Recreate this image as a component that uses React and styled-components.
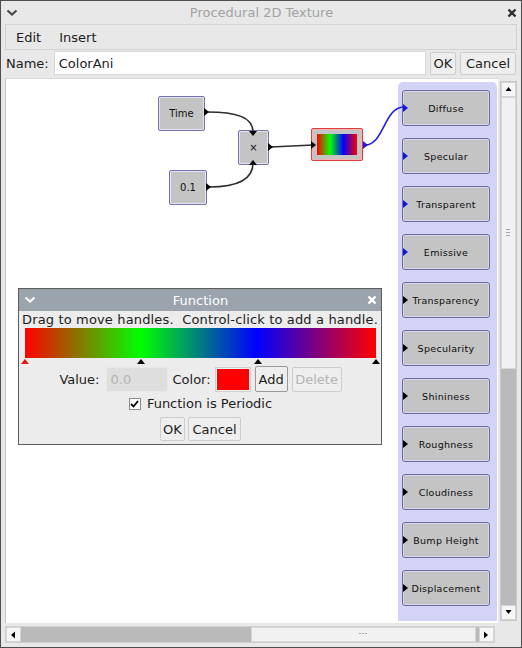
import React from "react";
import styled, { createGlobalStyle } from "styled-components";

const GlobalStyle = createGlobalStyle`
  html, body { margin: 0; padding: 0; background: #e8e8e8; }
  body {
    font-family: "DejaVu Sans", Verdana, sans-serif;
    font-size: 13px;
    color: #1c1c1c;
  }
  * { box-sizing: border-box; }
`;

const SPECTRUM = "linear-gradient(to right, #ff0000 0%, #00ff00 33%, #0000ff 66%, #ff0000 100%)";

const Frame = styled.div`
  width: 522px;
  height: 648px;
  border: 1px solid #4e4e4e;
  background: #e8e8e8;
  display: flex;
  flex-direction: column;
  overflow: hidden;
`;

const TitleBar = styled.div`
  height: 23px;
  display: grid;
  grid-template-columns: 24px 1fr 24px;
  align-items: center;
  padding: 0 4px 0 5px;
  color: ${(p) => (p.$light ? "#fff" : "#a2a2a2")};
  background: ${(p) => p.$bg || "transparent"};
`;

const TitleText = styled.div`
  text-align: center;
  line-height: 1;
`;

const TitleIcon = styled.svg`
  display: block;
  justify-self: ${(p) => (p.$end ? "end" : "start")};
`;

const MenuBar = styled.div`
  height: 26px;
  margin: 0 4px;
  border: 1px solid #d2d2d2;
  display: flex;
  align-items: center;
  gap: 18px;
  padding-left: 10px;
`;

const NameRow = styled.div`
  height: 26px;
  display: flex;
  align-items: center;
  gap: 4px;
  padding: 0 5px 0 5px;
`;

const Label = styled.span`
  margin-right: ${(p) => p.$gap || 0}px;
  color: ${(p) => (p.$muted ? "#a8a8a8" : "inherit")};
`;

const TextField = styled.div`
  flex: 1;
  height: 24px;
  background: #fff;
  border: 1px solid #d6d6d6;
  display: flex;
  align-items: center;
  padding-left: 4px;
`;

const Button = styled.div`
  height: ${(p) => p.$h || 23}px;
  width: ${(p) => p.$w}px;
  display: flex;
  align-items: center;
  justify-content: center;
  background: #eeeeee;
  border: 1px solid ${(p) => (p.$focus ? "#9a9a9a" : "#cdcdcd")};
  border-radius: 2px;
  color: ${(p) => (p.$disabled ? "#b4b4b4" : "#1c1c1c")};
`;

const Content = styled.div`
  flex: 1;
  margin: 2px 4px 4px 4px;
  display: grid;
  grid-template-columns: 1fr 17px;
  grid-template-rows: 1fr 17px;
  column-gap: 2px;
  row-gap: 3px;
`;

const Viewport = styled.div`
  position: relative;
  background: #fff;
  border-left: 1px solid #c4c4c4;
  border-top: 1px solid #dadada;
  overflow: hidden;
`;

const Wires = styled.svg`
  position: absolute;
  left: 0;
  top: 0;
  z-index: 1;
  pointer-events: none;
`;

const Node = styled.div`
  position: absolute;
  left: ${(p) => p.$x - 6}px;
  top: ${(p) => p.$y - 80}px;
  width: ${(p) => p.$w}px;
  height: ${(p) => p.$h}px;
  background: #c4c4c4;
  border: 1px solid ${(p) => (p.$selected ? "#e23c3c" : "#7474aa")};
  box-shadow: inset 0 0 0 1px ${(p) => (p.$selected ? "#f4b4b4" : "#e4e4f0")};
  border-radius: 2px;
  display: flex;
  align-items: center;
  justify-content: center;
  font-size: 10px;
  color: #111;
`;

const Swatch = styled.div`
  width: 40px;
  height: 21px;
  background: ${SPECTRUM};
`;

const OutputPanel = styled.div`
  position: absolute;
  left: 392px;
  top: 3px;
  bottom: 2px;
  width: 99px;
  background: #d3d3f6;
  border-radius: 5px 5px 0 0;
  display: flex;
  flex-direction: column;
  gap: 12px;
  padding: 8px 0 0 4px;
`;

const Port = styled.div`
  position: relative;
  width: 88px;
  height: 36px;
  background: #c4c4c4;
  border: 1px solid #6a6aa6;
  box-shadow: inset 0 0 0 1px #d8d8e4;
  border-radius: 3px;
  display: flex;
  align-items: center;
  justify-content: center;
  font-size: 9.5px;
  letter-spacing: 0.3px;
  color: #0c0c0c;

  &::before {
    content: "";
    position: absolute;
    left: 0;
    top: 13px;
    border-style: solid;
    border-width: 4px 0 4px 5px;
    border-color: transparent transparent transparent ${(p) => (p.$input ? "#1414e0" : "#000")};
  }
`;

const Dialog = styled.div`
  position: absolute;
  left: 12px;
  top: 209px;
  width: 364px;
  height: 157px;
  z-index: 2;
  border: 1px solid #5c5c5c;
  background: #ececec;
  display: flex;
  flex-direction: column;
`;

const DialogBody = styled.div`
  flex: 1;
  display: flex;
  flex-direction: column;
  padding: 0 5px 3px 3px;
`;

const Hint = styled.div`
  height: 17px;
  line-height: 17px;
  white-space: nowrap;
  letter-spacing: 0.15px;
`;

const GradientBar = styled.div`
  height: 30px;
  margin: 0 0 0 3px;
  background: ${SPECTRUM};
`;

const HandleTrack = styled.div`
  position: relative;
  height: 8px;
  margin: 0 0 0 3px;
`;

const Handle = styled.div`
  position: absolute;
  top: 1px;
  width: 0;
  height: 0;
  margin-left: -4px;
  border-style: solid;
  border-width: 0 4px 5px 4px;
  border-color: transparent transparent ${(p) => (p.$active ? "#e01818" : "#000")} transparent;
`;

const Row = styled.div`
  height: ${(p) => p.$h}px;
  margin-top: ${(p) => p.$mt || 0}px;
  display: flex;
  align-items: center;
  justify-content: center;
  gap: ${(p) => p.$gap || 4}px;
  padding-left: 3px;
`;

const ValueInput = styled.div`
  width: 62px;
  height: 25px;
  background: #dedede;
  border: 1px solid #e8e8e8;
  color: #b4b4b4;
  display: flex;
  align-items: center;
  padding-left: 4px;
`;

const ColorWell = styled.div`
  width: 34px;
  height: 23px;
  background: #ff0000;
  border: 1px solid #f4f4f4;
  outline: 1px solid #cfcfcf;
`;

const Check = styled.div`
  width: 12px;
  height: 12px;
  background: #fff;
  border: 1px solid #8c8c8c;
  display: flex;
  align-items: center;
  justify-content: center;
  margin-right: 3px;
`;

const VScroll = styled.div`
  margin: 3px 0 2px 0;
  display: flex;
  flex-direction: column;
  background: #bababa;
  border: 1px solid #c8c8c8;
`;

const HScroll = styled.div`
  display: flex;
  background: #bababa;
  border: 1px solid #d0d0d0;
  margin-right: 3px;
`;

const ArrowBtn = styled.div`
  flex: 0 0 15px;
  display: flex;
  align-items: center;
  justify-content: center;
  background: #f6f6f6;
  border: 1px solid #d4d4d4;
`;

const Thumb = styled.div`
  ${(p) => (p.$vertical ? "height" : "width")}: ${(p) => p.$size}px;
  ${(p) => (p.$vertical ? "" : "flex: 0 0 auto;")}
  margin-${(p) => (p.$vertical ? "top" : "left")}: ${(p) => p.$offset || 0}px;
  background: #f1f1f1;
  border: 1px solid #d6d6d6;
  display: flex;
  align-items: center;
  justify-content: center;
`;

const Spacer = styled.div`
  flex: 1;
`;

const Corner = styled.div`
  background: #e8e8e8;
`;

const Tri = ({ dir }) => {
  const pts = {
    up: "0,4 6,4 3,0",
    down: "0,0 6,0 3,4",
    left: "4,0 4,7 0,3.5",
    right: "0,0 0,7 4,3.5",
  }[dir];
  const vertical = dir === "up" || dir === "down";
  return (
    <svg width={vertical ? 7 : 5} height={vertical ? 5 : 8} viewBox={vertical ? "-0.5 0 7 5" : "0 -0.5 5 8"}>
      <polygon points={pts} fill="#000" />
    </svg>
  );
};

const Grip = ({ vertical }) => (
  <svg width={vertical ? 5 : 9} height={vertical ? 9 : 5}>
    {[0, 3, 6].map((o) =>
      vertical ? (
        <rect key={o} x="0" y={o} width="4" height="1" fill="#a6a6a6" />
      ) : (
        <rect key={o} x={o} y="1" width="2" height="1" fill="#a6a6a6" />
      )
    )}
  </svg>
);

const Chevron = ({ color }) => (
  <TitleIcon width="12" height="8" viewBox="0 0 12 8">
    <polyline points="1.5,1.5 6,5.5 10.5,1.5" fill="none" stroke={color} strokeWidth="2.2" />
  </TitleIcon>
);

const Close = ({ color }) => (
  <TitleIcon $end width="10" height="10" viewBox="0 0 10 10">
    <path d="M1.5 1.5 L8.5 8.5 M8.5 1.5 L1.5 8.5" stroke={color} strokeWidth="2.4" />
  </TitleIcon>
);

const channels = [
  { name: "Diffuse", input: true },
  { name: "Specular", input: true },
  { name: "Transparent", input: true },
  { name: "Emissive", input: true },
  { name: "Transparency" },
  { name: "Specularity" },
  { name: "Shininess" },
  { name: "Roughness" },
  { name: "Cloudiness" },
  { name: "Bump Height" },
  { name: "Displacement" },
];

const handles = [
  { pos: 0, active: true },
  { pos: 0.33 },
  { pos: 0.665 },
  { pos: 1 },
];

export default function App() {
  return (
    <>
      <GlobalStyle />
      <Frame>
        <TitleBar>
          <Chevron color="#4a4a4a" />
          <TitleText>Procedural 2D Texture</TitleText>
          <Close color="#2e2e2e" />
        </TitleBar>

        <MenuBar>
          <span>Edit</span>
          <span>Insert</span>
        </MenuBar>

        <NameRow>
          <Label $gap={1}>Name:</Label>
          <TextField>ColorAni</TextField>
          <Button $w={26}>OK</Button>
          <Button $w={56}>Cancel</Button>
        </NameRow>

        <Content>
          <Viewport>
            <Wires width="495" height="543" viewBox="6 80 495 543">
              <g fill="none" strokeWidth="1.6">
                <path d="M207 113 C236 113 253 118 253 133" stroke="#2e2e2e" />
                <path d="M209 188 C238 188 253 180 253 164" stroke="#2e2e2e" />
                <path d="M271 148 L313 146" stroke="#2e2e2e" />
                <path d="M365 146 C384 146 384 108 404 108" stroke="#1c1ce0" />
              </g>
              <polygon points="204,109 204,117 209,113" fill="#000" />
              <polygon points="206,184 206,192 211,188" fill="#000" />
              <polygon points="249,132 257,132 253,137" fill="#000" />
              <polygon points="249,166 257,166 253,161" fill="#000" />
              <polygon points="268,144 268,152 273,148" fill="#000" />
              <polygon points="311,142 311,150 316,146" fill="#000" />
              <polygon points="363,142 363,150 368,146" fill="#1c1ce0" />
            </Wires>

            <Node $x={158} $y={97} $w={47} $h={35}>Time</Node>
            <Node $x={238} $y={131} $w={31} $h={35}>×</Node>
            <Node $x={169} $y={171} $w={38} $h={35}>0.1</Node>
            <Node $x={311} $y={129} $w={52} $h={33} $selected>
              <Swatch />
            </Node>

            <OutputPanel>
              {channels.map((c) => (
                <Port key={c.name} $input={c.input}>
                  {c.name}
                </Port>
              ))}
            </OutputPanel>

            <Dialog>
              <TitleBar $bg="#9ba3ac" $light>
                <Chevron color="#fff" />
                <TitleText>Function</TitleText>
                <Close color="#fff" />
              </TitleBar>
              <DialogBody>
                <Hint>Drag to move handles.&nbsp; Control-click to add a handle.</Hint>
                <GradientBar />
                <HandleTrack>
                  {handles.map((h) => (
                    <Handle key={h.pos} $active={h.active} style={{ left: `${h.pos * 100}%` }} />
                  ))}
                </HandleTrack>
                <Row $h={26} $gap={4}>
                  <Label $gap={2}>Value:</Label>
                  <ValueInput>0.0</ValueInput>
                  <Label $gap={1} style={{ marginLeft: 1 }}>Color:</Label>
                  <ColorWell />
                  <Button $w={33} $h={26} $focus style={{ marginLeft: 1 }}>Add</Button>
                  <Button $w={50} $h={25} $disabled>Delete</Button>
                </Row>
                <Row $h={23} $gap={3}>
                  <Check>
                    <svg width="9" height="8" viewBox="0 0 9 8">
                      <path d="M1 4 L3.5 6.5 L8 1" fill="none" stroke="#000" strokeWidth="1.8" />
                    </svg>
                  </Check>
                  <span>Function is Periodic</span>
                </Row>
                <Row $h={24} $mt={2} $gap={3}>
                  <Button $w={25} $h={24}>OK</Button>
                  <Button $w={53} $h={24}>Cancel</Button>
                </Row>
              </DialogBody>
            </Dialog>
          </Viewport>

          <VScroll>
            <ArrowBtn><Tri dir="up" /></ArrowBtn>
            <Thumb $vertical $size={272}>
              <Grip vertical />
            </Thumb>
            <Spacer />
            <ArrowBtn><Tri dir="down" /></ArrowBtn>
          </VScroll>

          <HScroll>
            <ArrowBtn><Tri dir="left" /></ArrowBtn>
            <Thumb $size={225} $offset={230}>
              <Grip />
            </Thumb>
            <Spacer />
            <ArrowBtn><Tri dir="right" /></ArrowBtn>
          </HScroll>
          <Corner />
        </Content>
      </Frame>
    </>
  );
}
